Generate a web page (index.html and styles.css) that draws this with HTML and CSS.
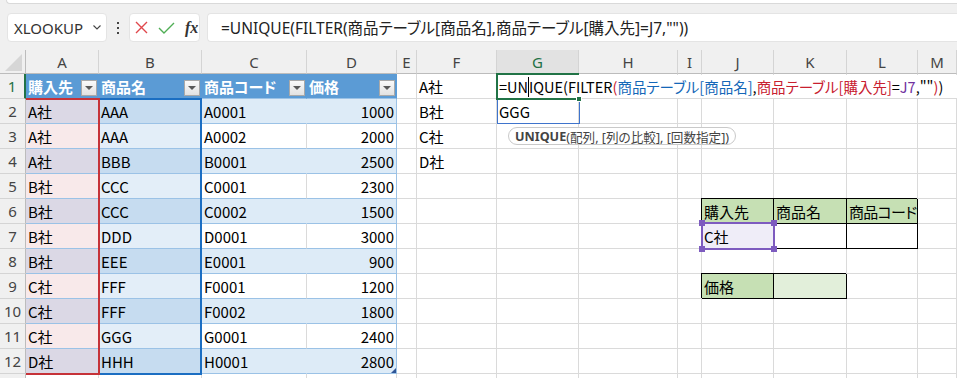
FILE: index.html
```html
<!DOCTYPE html>
<html lang="ja">
<head>
<meta charset="utf-8">
<title>Excel UNIQUE FILTER</title>
<link rel="stylesheet" href="styles.css">
</head>
<body>
<div class="app">
  <div class="top">
    <div class="ribbon-edge"></div>
    <div class="fbar">
      <div class="namebox"><span>XLOOKUP</span><svg class="chev" width="8" height="5" viewBox="0 0 8 5"><path d="M0.5 0.5L4 4L7.5 0.5" stroke="#444" fill="none" stroke-width="1.1"/></svg></div>
      <div class="vdots"><i></i><i></i><i></i></div>
      <div class="fxbox">
        <svg width="13" height="13" viewBox="0 0 13 13"><path d="M1 1L12 12M12 1L1 12" stroke="#e0474c" stroke-width="1.4" fill="none"/></svg>
        <svg width="17" height="12" viewBox="0 0 17 12"><path d="M1 6L6 11L16 1" stroke="#4fae55" stroke-width="1.4" fill="none"/></svg>
        <span class="fx">fx</span>
      </div>
      <div class="formula">=UNIQUE(FILTER(商品テーブル[商品名],商品テーブル[購入先]=J7,""))</div>
    </div>
  </div>

  <div class="sheet">
    <div class="row hdr">
      <div class="corner"><svg width="17" height="17" viewBox="0 0 17 17"><path d="M17 0V17H0Z" fill="#d6d6d6"/></svg></div>
      <div>A</div><div>B</div><div>C</div><div>D</div><div>E</div><div>F</div><div class="sel">G</div><div>H</div><div>I</div><div>J</div><div>K</div><div>L</div><div>M</div>
    </div>

    <div class="row">
      <div class="rh sel">1</div>
      <div class="th">購入先<span class="dd"></span></div>
      <div class="th">商品名<span class="dd"></span></div>
      <div class="th">商品コード<span class="dd"></span></div>
      <div class="th">価格<span class="dd"></span></div>
      <div></div>
      <div>A社</div>
      <div class="active">
        <div class="edit">=UN<span class="caret"></span>IQUE(FILTER<span class="fr">(</span><span class="fb">商品テーブル[商品名]</span>,<span class="fr">商品テーブル[購入先]</span>=<span class="fp">J7</span>,""<span class="fr">)</span>)</div>
        <span class="actbox"></span><span class="handle"></span>
      </div>
      <div></div><div></div><div></div><div></div><div></div><div></div>
    </div>

    <div class="row band">
      <div class="rh">2</div>
      <div class="ta">A社</div><div class="tb">AAA</div><div class="tc">A0001</div><div class="tn">1000</div>
      <div></div><div>B社</div>
      <div class="spill">GGG<span class="spillbox"></span></div>
      <div></div><div></div><div></div><div></div><div></div><div></div>
    </div>

    <div class="row">
      <div class="rh">3</div>
      <div class="ta">A社</div><div class="tb">AAA</div><div class="tc">A0002</div><div class="tn">2000</div>
      <div></div><div>C社</div>
      <div class="tipcell"><div class="tip"><b>UNIQUE</b>(配列, [列の比較], [回数指定])</div></div>
      <div></div><div></div><div></div><div></div><div></div><div></div>
    </div>

    <div class="row band">
      <div class="rh">4</div>
      <div class="ta">A社</div><div class="tb">BBB</div><div class="tc">B0001</div><div class="tn">2500</div>
      <div></div><div>D社</div>
      <div></div><div></div><div></div><div></div><div></div><div></div><div></div>
    </div>

    <div class="row">
      <div class="rh">5</div>
      <div class="ta">B社</div><div class="tb">CCC</div><div class="tc">C0001</div><div class="tn">2300</div>
      <div></div><div></div><div></div><div></div><div></div><div></div><div></div><div></div><div></div>
    </div>

    <div class="row band">
      <div class="rh">6</div>
      <div class="ta">B社</div><div class="tb">CCC</div><div class="tc">C0002</div><div class="tn">1500</div>
      <div></div><div></div><div></div><div></div><div></div>
      <div class="g bx">購入先</div><div class="g bx">商品名</div><div class="g bx narrow">商品コード</div>
      <div></div>
    </div>

    <div class="row">
      <div class="rh">7</div>
      <div class="ta">B社</div><div class="tb">DDD</div><div class="tc">D0001</div><div class="tn">3000</div>
      <div></div><div></div><div></div><div></div><div></div>
      <div class="pref bx">C社<span class="prefbox"><i class="h1"></i><i class="h2"></i><i class="h3"></i><i class="h4"></i></span></div>
      <div class="bx"></div><div class="bx"></div>
      <div></div>
    </div>

    <div class="row band">
      <div class="rh">8</div>
      <div class="ta">B社</div><div class="tb">EEE</div><div class="tc">E0001</div><div class="tn">900</div>
      <div></div><div></div><div></div><div></div><div></div><div></div><div></div><div></div><div></div>
    </div>

    <div class="row">
      <div class="rh">9</div>
      <div class="ta">C社</div><div class="tb">FFF</div><div class="tc">F0001</div><div class="tn">1200</div>
      <div></div><div></div><div></div><div></div><div></div>
      <div class="g bx">価格</div><div class="lg bx"></div>
      <div></div><div></div>
    </div>

    <div class="row band">
      <div class="rh">10</div>
      <div class="ta">C社</div><div class="tb">FFF</div><div class="tc">F0002</div><div class="tn">1800</div>
      <div></div><div></div><div></div><div></div><div></div><div></div><div></div><div></div><div></div>
    </div>

    <div class="row">
      <div class="rh">11</div>
      <div class="ta">C社</div><div class="tb">GGG</div><div class="tc">G0001</div><div class="tn">2400</div>
      <div></div><div></div><div></div><div></div><div></div><div></div><div></div><div></div><div></div>
    </div>

    <div class="row band">
      <div class="rh">12</div>
      <div class="ta">D社</div><div class="tb">HHH</div><div class="tc">H0001</div><div class="tn last">2800</div>
      <div></div><div></div><div></div><div></div><div></div><div></div><div></div><div></div><div></div>
    </div>

    <div class="row">
      <div class="rh"></div>
      <div></div><div></div><div></div><div></div><div></div><div></div><div></div><div></div><div></div><div></div><div></div><div></div><div></div>
    </div>

    <div class="refbox ref-a"></div>
    <div class="refbox ref-b"></div>
  </div>
</div>
</body>
</html>
```
FILE: styles.css
```css
* { box-sizing: border-box; margin: 0; padding: 0; }
html, body { width: 957px; height: 378px; overflow: hidden; background: #fff; }
body { font-family: "Noto Sans", "Noto Sans CJK JP", sans-serif; }

.app { width: 957px; height: 378px; overflow: hidden; display: flex; flex-direction: column; }

/* ---------- formula bar area ---------- */
.top { height: 50px; flex: none; background: #f0f0f0; display: flex; flex-direction: column; }
.ribbon-edge { height: 4px; margin-left: 6px; background: #fff; border-left: 1px solid #d9d9d9; border-bottom: 1px solid #d9d9d9; border-bottom-left-radius: 5px; }
.fbar { display: flex; align-items: center; height: 29px; margin-top: 9px; padding-left: 7px; }
.namebox { width: 100px; height: 29px; flex: none; background: #fff; border: 1px solid #e4e4e4; border-radius: 4px; display: flex; align-items: center; justify-content: space-between; padding: 0 5px 0 6px; font-size: 15px; color: #333; }
.vdots { width: 22px; flex: none; display: flex; flex-direction: column; align-items: center; gap: 3px; }
.vdots i { display: block; width: 2px; height: 2px; background: #444; }
.fxbox { width: 71px; height: 29px; flex: none; background: #fff; border: 1px solid #e4e4e4; border-radius: 4px; display: flex; align-items: center; padding-left: 5px; gap: 10px; }
.fx { font-family: "Liberation Serif", serif; font-style: italic; font-weight: 700; font-size: 16px; color: #333; }
.formula { flex: 1; height: 29px; margin-left: 7px; background: #fff; border: 1px solid #e4e4e4; border-right: none; border-radius: 4px 0 0 4px; padding-left: 13px; display: flex; align-items: center; font-family: "Noto Sans", "Noto Sans CJK JP", sans-serif; font-size: 15.5px; color: #222; white-space: nowrap; font-feature-settings: "palt"; }

/* ---------- sheet ---------- */
.sheet { --cols: 26px 73px 103px 105px 90px 20px 80px 82px 99px 24px 72px 73px 71px 39px; position: relative; flex: 1; overflow: hidden; font-family: "Noto Sans CJK JP", sans-serif; font-size: 15px; font-feature-settings: "palt"; color: #000; }
.row { display: grid; grid-template-columns: var(--cols); height: 25px; }
.row > div { position: relative; min-width: 0; display: flex; align-items: center; padding: 0 2px; white-space: nowrap; border-right: 1px solid #dadada; border-bottom: 1px solid #dadada; }

/* headers */
.row.hdr { height: 24px; }
.hdr > div { background: #f0f0f0; justify-content: center; border-right-color: #d4d4d4; border-bottom-color: #bcbcbc; font-family: "Noto Sans", sans-serif; font-size: 15px; color: #444; }
.hdr > .corner { justify-content: flex-end; align-items: flex-end; padding: 0 3px 2px 0; border-right-color: #bcbcbc; }
.hdr > .sel { background: #e2e2e2; color: #1e7145; }
.row > .rh { background: #f0f0f0; justify-content: center; padding: 0; border-right-color: #bcbcbc; border-bottom-color: #d4d4d4; font-family: "Noto Sans", sans-serif; font-size: 15px; color: #444; }
.row > .rh.sel { color: #1e7145; border-right: 2px solid #217346; }

/* table */
.row > .th { background: #5b9bd5; color: #fff; font-weight: 700; border-right-color: #5b9bd5; border-bottom-color: #9bc2e6; padding-right: 1px; }
.dd { width: 16px; height: 16px; flex: none; margin-left: auto; align-self: flex-end; margin-bottom: 2px; background: linear-gradient(#fafafa, #e2e2e2); border: 1px solid #a9a9a9; display: flex; align-items: center; justify-content: center; }
.dd::after { content: ""; border-left: 4px solid transparent; border-right: 4px solid transparent; border-top: 4px solid #595959; }
.row > .ta, .row > .tb, .row > .tc, .row > .tn { border-bottom-color: #9bc2e6; }
.row > .ta { background: #f8e9ea; }
.row > .tb { background: #e3eef8; }
.row > .tn { justify-content: flex-end; border-right-color: #9bc2e6; }
.band > .ta { background: #dbd8e5; }
.band > .tb { background: #c6dcf0; }
.band > .tc, .band > .tn { background: #ddebf7; }
.band > .tc { border-right-color: #ddebf7; }
.tn.last::after { content: ""; position: absolute; right: 0; bottom: 0; border-left: 5px solid transparent; border-bottom: 5px solid #2f5597; }

/* reference highlight boxes (overlay) */
.refbox { position: absolute; top: 48px; height: 277px; border: 2px solid; border-left: none; z-index: 3; pointer-events: none; }
.ref-a { left: 26px; width: 74px; border-color: #c63238; }
.ref-b { left: 100px; width: 102px; border-color: #1b6ec2; }

/* active cell G1 in edit mode */
.edit { position: absolute; left: 1px; top: 1px; width: 459px; height: 23px; background: #fff; z-index: 4; display: flex; align-items: center; padding-left: 1px; color: #000; font-size: 14.5px; }
.caret { display: inline-block; width: 1px; height: 20px; background: #000; }
.fr { color: #c8202f; }
.fb { color: #1467b8; }
.fp { color: #7030a0; }
.actbox { position: absolute; left: -1px; top: -1px; width: 83px; height: 27px; border: 2px solid #217346; border-right: none; z-index: 5; }
.handle { position: absolute; left: 79px; top: 22px; width: 6px; height: 6px; background: #217346; border: 1px solid #fff; z-index: 6; }

/* spill cell G2 */
.spillbox { position: absolute; left: 0; top: -1px; width: 83px; height: 26px; border: 1px solid #3f74cc; z-index: 3; }

/* tooltip */
.tip { position: absolute; left: 11px; top: 3px; height: 18px; padding: 0 6px; background: #fff; border: 1px solid #c9c9c9; border-radius: 9px; font-family: "Noto Sans", "Noto Sans CJK JP", sans-serif; font-size: 12.6px; color: #444; display: flex; align-items: center; white-space: nowrap; z-index: 7; }
.tip b { font-weight: 700; }

/* J6:L7, J9:K9 block */
.row > .g { background: #c6e0b4; }
.row > .lg { background: #e2efda; }
.row > .bx { border-right-color: #000; border-bottom-color: #000; box-shadow: -1px -1px 0 #000; }
.row > .narrow { letter-spacing: -0.7px; }
.row > .pref { background: #efedf8; }
.prefbox { position: absolute; left: -1px; top: -2px; width: 74px; height: 28px; border: 2px solid #7d5bbf; z-index: 3; }
.prefbox i { position: absolute; width: 6px; height: 6px; background: #7d5bbf; }
.prefbox .h1 { left: -4px; top: -4px; }
.prefbox .h2 { right: -4px; top: -4px; }
.prefbox .h3 { left: -4px; bottom: -4px; }
.prefbox .h4 { right: -4px; bottom: -4px; }
```
